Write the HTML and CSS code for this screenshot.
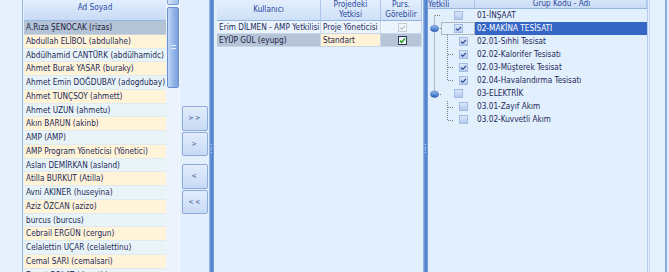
FILE: index.html
```html
<!doctype html>
<html lang="tr">
<head>
    <meta charset="utf-8">
    <title>Proje Yetkileri</title>
    <link rel="stylesheet" href="styles.css">
</head>
<body>
    <div class="window">
        <div class="gutter"></div>

        <!-- user list -->
        <div class="users">
            <div class="users-list">
                <div class="grid-head">Ad Soyad</div>
                <div class="user-row sel">A.Rıza ŞENOCAK (rizas)</div>
                <div class="user-row">Abdullah ELİBOL (abdullahe)</div>
                <div class="user-row">Abdülhamid CANTÜRK (abdülhamidc)</div>
                <div class="user-row">Ahmet Burak YASAR (buraky)</div>
                <div class="user-row">Ahmet Emin DOĞDUBAY (adogdubay)</div>
                <div class="user-row">Ahmet TUNÇSOY (ahmett)</div>
                <div class="user-row">Ahmet UZUN (ahmetu)</div>
                <div class="user-row">Akın BARUN (akinb)</div>
                <div class="user-row">AMP (AMP)</div>
                <div class="user-row">AMP Program Yöneticisi (Yönetici)</div>
                <div class="user-row">Aslan DEMİRKAN (asland)</div>
                <div class="user-row">Atilla BURKUT (Atilla)</div>
                <div class="user-row">Avni AKINER (huseyina)</div>
                <div class="user-row">Aziz ÖZCAN (azizo)</div>
                <div class="user-row">burcus (burcus)</div>
                <div class="user-row">Cebrail ERGÜN (cergun)</div>
                <div class="user-row">Celalettin UÇAR (celalettinu)</div>
                <div class="user-row">Cemal SARI (cemalsari)</div>
                <div class="user-row">Davut BOLAT (davutb)</div>
            </div>
            <div class="vscroll">
                <div class="sb-arrow"></div>
                <div class="sb-thumb"><span class="sb-grip"></span></div>
            </div>
        </div>

        <div class="mover">
            <div class="btn-group first">
                <button class="mv-btn">&gt;&gt;</button>
                <button class="mv-btn">&gt;</button>
            </div>
            <div class="btn-group">
                <button class="mv-btn">&lt;</button>
                <button class="mv-btn">&lt;&lt;</button>
            </div>
        </div>

        <div class="splitter"><span class="split-grip"></span></div>

        <!-- project members -->
        <div class="members">
            <div class="members-grid">
                <div class="m-row m-head">
                    <div class="c-user">Kullanıcı</div>
                    <div class="c-role">Projedeki<br>Yetkisi</div>
                    <div class="c-see">Purs.<br>Görebilir</div>
                </div>
                <div class="m-row">
                    <div class="c-user">Erim DİLMEN - AMP Yetkilisi</div>
                    <div class="c-role">Proje Yöneticisi</div>
                    <div class="c-see">
                        <span class="gcb off">
                            <svg viewBox="0 0 9 9" width="9" height="9"><path d="M2 4.6 L3.7 6.3 L7 2.8" fill="none" stroke="#b9bfc7" stroke-width="1.2"/></svg>
                        </span>
                    </div>
                </div>
                <div class="m-row m-sel">
                    <div class="c-user">EYÜP GÜL (eyupg)</div>
                    <div class="c-role focus">Standart</div>
                    <div class="c-see">
                        <span class="gcb">
                            <svg viewBox="0 0 9 9" width="9" height="9"><path d="M2 4.6 L3.7 6.3 L7 2.6" fill="none" stroke="#21a421" stroke-width="1.5"/></svg>
                        </span>
                    </div>
                </div>
            </div>
        </div>

        <div class="splitter"><span class="split-grip"></span></div>

        <!-- group tree -->
        <div class="tree">
            <div class="t-head">
                <div class="t-check">Yetkili</div>
                <div class="t-name">Grup Kodu - Adı</div>
            </div>
            <div class="t-body">
                <svg class="t-lines" width="47" height="120" viewBox="0 0 47 120">
                    <defs>
                        <linearGradient id="knob" x1="0" y1="0" x2="0" y2="1">
                            <stop offset="0" stop-color="#a9c6f0"/>
                            <stop offset="0.5" stop-color="#5d8fd9"/>
                            <stop offset="1" stop-color="#2f5fb3"/>
                        </linearGradient>
                    </defs>
                    <g fill="none" stroke="#7c7f86" stroke-width="1" stroke-dasharray="1 1">
                        <path d="M6.5 6.5 V85"/>
                        <path d="M7 6.5 H13"/>
                        <path d="M10 19.5 H13"/>
                        <path d="M10 85.5 H13"/>
                        <path d="M19.5 26 V72"/>
                        <path d="M20 45.5 H25 M20 58.5 H25 M20 71.5 H25"/>
                        <path d="M19.5 92 V111"/>
                        <path d="M20 98.5 H25 M20 111.5 H25"/>
                        <rect x="13.5" y="13.5" width="33" height="12"/>
                    </g>
                    <ellipse cx="6.5" cy="19.6" rx="4" ry="3.2" fill="url(#knob)" stroke="#3a64ad" stroke-width="0.6"/>
                    <ellipse cx="6.5" cy="85.2" rx="4" ry="3.2" fill="url(#knob)" stroke="#3a64ad" stroke-width="0.6"/>
                </svg>
                <div class="t-row">
                    <div class="t-check"><span class="cb top"></span></div>
                    <div class="t-name">01-İNŞAAT</div>
                </div>
                <div class="t-row t-sel">
                    <div class="t-check"><span class="cb top"><svg viewBox="0 0 9 9" width="9" height="9"><path d="M2 4.6 L3.7 6.3 L7 2.8" fill="none" stroke="#1d3a86" stroke-width="1.1"/></svg></span></div>
                    <div class="t-name">02-MAKİNA TESİSATI</div>
                </div>
                <div class="t-row">
                    <div class="t-check"><span class="cb"><svg viewBox="0 0 9 9" width="9" height="9"><path d="M2 4.6 L3.7 6.3 L7 2.8" fill="none" stroke="#1d3a86" stroke-width="1.1"/></svg></span></div>
                    <div class="t-name">02.01-Sıhhi Tesisat</div>
                </div>
                <div class="t-row">
                    <div class="t-check"><span class="cb"><svg viewBox="0 0 9 9" width="9" height="9"><path d="M2 4.6 L3.7 6.3 L7 2.8" fill="none" stroke="#1d3a86" stroke-width="1.1"/></svg></span></div>
                    <div class="t-name">02.02-Kalorifer Tesisatı</div>
                </div>
                <div class="t-row">
                    <div class="t-check"><span class="cb"><svg viewBox="0 0 9 9" width="9" height="9"><path d="M2 4.6 L3.7 6.3 L7 2.8" fill="none" stroke="#1d3a86" stroke-width="1.1"/></svg></span></div>
                    <div class="t-name">02.03-Müşterek Tesisat</div>
                </div>
                <div class="t-row">
                    <div class="t-check"><span class="cb"><svg viewBox="0 0 9 9" width="9" height="9"><path d="M2 4.6 L3.7 6.3 L7 2.8" fill="none" stroke="#1d3a86" stroke-width="1.1"/></svg></span></div>
                    <div class="t-name">02.04-Havalandırma Tesisatı</div>
                </div>
                <div class="t-row">
                    <div class="t-check"><span class="cb top"></span></div>
                    <div class="t-name">03-ELEKTRİK</div>
                </div>
                <div class="t-row">
                    <div class="t-check"><span class="cb"></span></div>
                    <div class="t-name">03.01-Zayıf Akım</div>
                </div>
                <div class="t-row">
                    <div class="t-check"><span class="cb"></span></div>
                    <div class="t-name">03.02-Kuvvetli Akım</div>
                </div>
            </div>
        </div>

        <div class="r-edge"></div>
    </div>
</body>
</html>
```

FILE: styles.css
```css
body {
    margin: 0;
    font-family: 'DejaVu Sans Condensed', 'Liberation Sans', Arial, sans-serif;
    font-size: 8.2px;
    color: #1e2a5a;
    background-color: #e3effc;
}

.window {
    display: flex;
    width: 669px;
    height: 272px;
    overflow: hidden;
}

.gutter {
    width: 22px;
    background-color: #e6f1fd;
    border-right: 1px solid #9fb6d6;
    margin-right: 1px;
}

/* user list */

.users {
    display: flex;
    width: 155px;
}

.users-list {
    width: 142px;
    overflow: hidden;
}

.grid-head {
    height: 21px;
    box-sizing: border-box;
    line-height: 14px;
    text-align: center;
    color: #2d4ca4;
    background: linear-gradient(#e2eefd, #c8dbf5);
    border-bottom: 1px solid #9ab6df;
}

.user-row {
    height: 13.75px;
    line-height: 13px;
    box-sizing: border-box;
    padding-left: 2px;
    white-space: nowrap;
    overflow: hidden;
    border-bottom: 1px solid #e1e9f1;
    background-color: #e8f4f7;
}

.user-row:nth-child(odd) {
    background-color: #fff3d8;
}

.user-row.sel {
    background-color: #b4c3d5;
    color: #1b2244;
    border-bottom-color: #c8d4e2;
}

.vscroll {
    width: 13px;
    background-color: #ecf3fc;
    display: flex;
    flex-direction: column;
    align-items: flex-end;
}

.sb-arrow {
    width: 12px;
    height: 5px;
    box-sizing: border-box;
    background: linear-gradient(to right, #d3e2f8, #9dbde9);
    border: 1px solid #7c9fd5;
    border-top: none;
    border-radius: 0 0 2px 2px;
}

.sb-thumb {
    width: 12px;
    height: 81px;
    margin-top: 2px;
    box-sizing: border-box;
    background: linear-gradient(to right, #c3d8f5, #8fb2e6 60%, #7aa2df);
    border: 1px solid #6a8fcc;
    border-radius: 2px;
    display: flex;
    justify-content: center;
    padding-top: 37px;
}

.sb-grip {
    width: 5px;
    height: 4px;
    border-top: 1px solid #e8f0fb;
    border-bottom: 1px solid #e8f0fb;
    box-sizing: border-box;
}

/* move buttons */

.mover {
    width: 30px;
    box-sizing: border-box;
    border-left: 1px solid #f2f8ff;
    padding-left: 2px;
    background-color: #e3effc;
}

.btn-group {
    display: flex;
    flex-direction: column;
    gap: 1px;
    margin-top: 8px;
}

.btn-group.first {
    margin-top: 106px;
}

.mv-btn {
    width: 26px;
    height: 24.5px;
    padding: 0;
    font-family: 'DejaVu Sans Condensed', 'Liberation Sans', Arial, sans-serif;
    font-size: 7px;
    letter-spacing: 1.5px;
    color: #3b4f8e;
    background: linear-gradient(#e2edfc, #c7daf5);
    border: 1px solid #8eabda;
    border-radius: 2px;
}

.splitter {
    width: 5px;
    background: linear-gradient(to right, #a7c3ec, #5c8bd3 35%, #4e7fcc 65%, #80a8e3);
    display: flex;
    justify-content: center;
    padding-top: 144px;
    box-sizing: border-box;
}

.split-grip {
    width: 1px;
    height: 9px;
    background: repeating-linear-gradient(#c9dbf5 0 1px, transparent 1px 2.5px);
}

/* members */

.members {
    width: 209px;
    padding-left: 3px;
    box-sizing: border-box;
    background-color: #e2effd;
}

.members-grid {
    width: 205px;
}

.m-row {
    display: flex;
    height: 13px;
    line-height: 12px;
    background-color: #ebf4fd;
    border-bottom: 1px solid #c7d6e8;
    box-sizing: border-box;
}

.m-row > div {
    box-sizing: border-box;
    padding-left: 2px;
    white-space: nowrap;
    overflow: hidden;
    border-right: 1px solid #c7d6e8;
}

.c-user {
    width: 104px;
}

.c-role {
    width: 60px;
}

.c-see {
    width: 41px;
    display: flex;
    justify-content: center;
    align-items: center;
}

.m-row.m-head {
    height: 21px;
    line-height: 10px;
    color: #2a469c;
    background: linear-gradient(#e3effd, #cfe0f7);
    border-bottom: 1px solid #98b5df;
}

.m-head > div {
    display: flex;
    align-items: center;
    justify-content: center;
    text-align: center;
    padding: 0 0 2px;
    border-right-color: #adc6ea;
    overflow: visible;
}

.m-row.m-sel {
    background-color: #b5c4d6;
    color: #1b2244;
}

.m-sel .focus {
    background-color: #fff2d6;
}

.gcb {
    width: 9px;
    height: 9px;
    box-sizing: border-box;
    border: 1px solid #2e3a55;
    background: linear-gradient(#e9edf2, #ffffff);
    display: flex;
}

.gcb svg {
    margin: -1px;
}

.gcb.off {
    border-color: #c5ccd6;
    background: #f3f6f9;
}

/* tree */

.tree {
    width: 220px;
    box-sizing: border-box;
    border-right: 1px solid #b3cbed;
    background-color: #e2effd;
}

.t-head {
    display: flex;
    height: 8.6px;
    box-sizing: border-box;
    overflow: hidden;
    line-height: 6px;
    color: #2a469c;
    background: linear-gradient(#d8e6fa, #c9dbf5);
    border-bottom: 1px solid #98b5df;
}

.t-head .t-check,
.t-head .t-name {
    text-align: center;
    border-right: 1px solid #adc6ea;
    box-sizing: border-box;
}

.t-body {
    position: relative;
}

.t-lines {
    position: absolute;
    left: 0;
    top: 0;
}

.t-row {
    display: flex;
    height: 13.1px;
    line-height: 13px;
}

.t-check {
    width: 47px;
    flex-shrink: 0;
    display: flex;
    align-items: center;
}

.t-name {
    flex: 1;
    padding-left: 2px;
    white-space: nowrap;
}

.t-sel .t-name {
    background-color: #3565c5;
    color: #ffffff;
}

.cb {
    width: 9px;
    height: 9px;
    margin-left: 31px;
    box-sizing: border-box;
    border: 1px solid #a3bbe4;
    background: linear-gradient(#dbe7f8, #b5caee);
    display: flex;
}

.cb.top {
    margin-left: 26px;
}

.cb svg {
    margin: -1px;
}

.r-edge {
    width: 15px;
    margin-left: 1px;
    margin-right: 2px;
    border-left: 1px solid #c3d7f1;
    border-right: 2px solid #8cafe2;
    background-color: #e5f0fd;
}
```
